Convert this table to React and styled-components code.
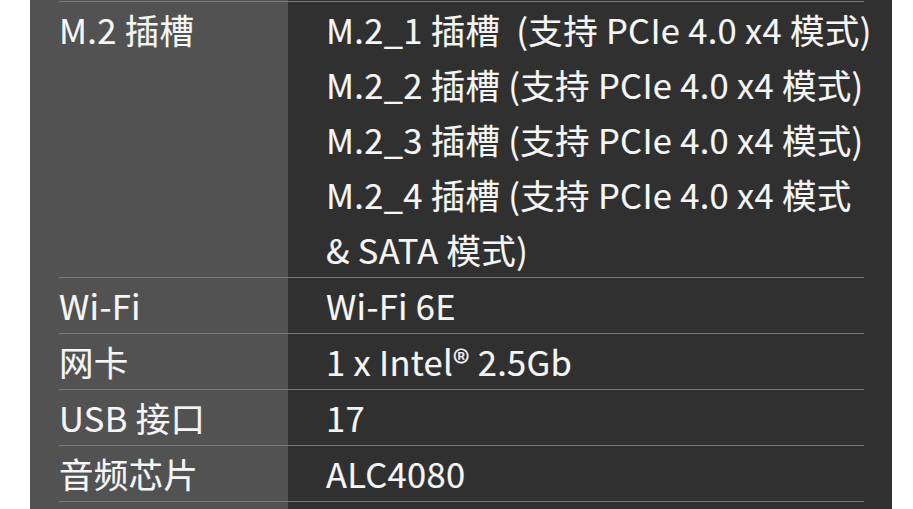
import React from 'react'
import styled, { createGlobalStyle } from 'styled-components'

const GlobalStyle = createGlobalStyle`
  body {
    margin: 0;
    background: #ffffff;
  }
`

const specs = [
  {
    label: 'M.2 插槽',
    lines: [
      'M.2_1 插槽\u00a0\u00a0(支持 PCIe 4.0 x4 模式)',
      'M.2_2 插槽 (支持 PCIe 4.0 x4 模式)',
      'M.2_3 插槽 (支持 PCIe 4.0 x4 模式)',
      'M.2_4 插槽 (支持 PCIe 4.0 x4 模式',
      '& SATA 模式)',
    ],
  },
  { label: 'Wi-Fi', lines: ['Wi-Fi 6E'] },
  { label: '网卡', lines: ['1 x Intel® 2.5Gb'] },
  { label: 'USB 接口', lines: ['17'] },
  { label: '音频芯片', lines: ['ALC4080'] },
]

const App = () => {
  return (
    <>
      <GlobalStyle />
      <Panel>
        <SpecTable>
          {specs.map((spec) => (
            <Row key={spec.label}>
              <Label>{spec.label}</Label>
              <Value>
                {spec.lines.map((line) => (
                  <Line key={line}>{line}</Line>
                ))}
              </Value>
            </Row>
          ))}
        </SpecTable>
      </Panel>
    </>
  )
}

const Panel = styled.div`
  margin-left: 30px;
  width: 862px;
  height: 509px;
  box-sizing: border-box;
  padding: 1px 28px 0 29px;
  /* two-tone columns behind the table */
  background: linear-gradient(90deg, #525252 258px, #303030 258px);
  font-family: 'Noto Sans CJK SC', 'Noto Sans', sans-serif;
  font-weight: 400;
  font-size: 34.5px;
  letter-spacing: 0.3px;
  color: #f6f6f6;
  -webkit-text-stroke: 0.15px #f6f6f6;
`

const SpecTable = styled.div`
  border-top: 1px solid #7a7a7a;
`

const Row = styled.div`
  display: grid;
  grid-template-columns: 229px 1fr;
  border-bottom: 1px solid #7a7a7a;
`

const Label = styled.div`
  line-height: 55px;
`

const Value = styled.div`
  padding-left: 38px;
`

const Line = styled.div`
  line-height: 55px;
  white-space: nowrap;
`

export default App
